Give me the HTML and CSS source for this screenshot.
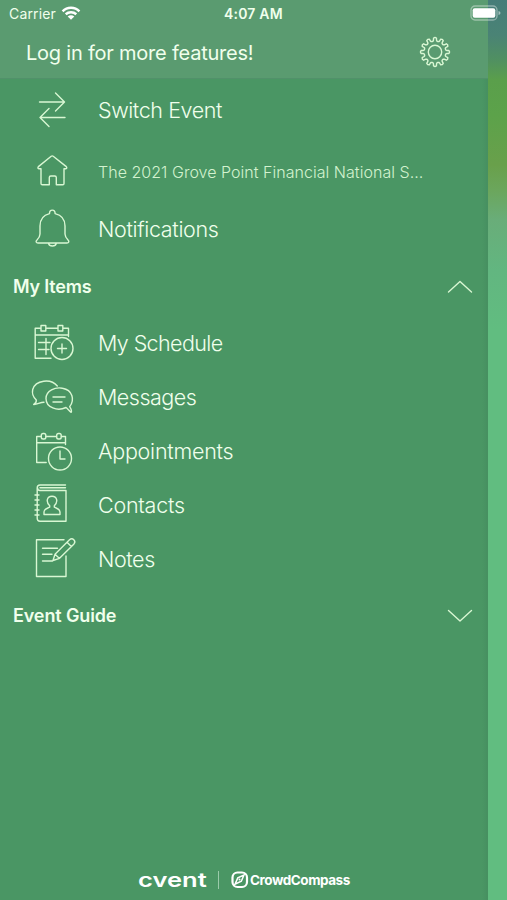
FILE: index.html
```html
<!DOCTYPE html>
<html lang="en">
<head>
<meta charset="utf-8">
<title>Event menu</title>
<link rel="stylesheet" href="styles.css">
</head>
<body>
<div class="screen">
  <nav class="drawer">
    <header class="top">
      <div class="status">
        <span class="carrier">Carrier</span>
        <svg class="wifi" viewBox="0 0 20 16"><path d="M1.600 6.300C6.200 1.700 13.800 1.700 18.400 6.300M4.700 9.300c3-2.700 7.600-2.700 10.600 0" fill="none" stroke="#fff" stroke-width="2.500"/><path d="M6.700 11.400c2-1.500 4.600-1.500 6.600 0L10 14.800z" fill="#fff"/></svg>
        <span class="time">4:07 AM</span>
      </div>
      <div class="login">
        <span class="login-text">Log in for more features!</span>
        <svg class="icon gear" viewBox="-16 -16 32 32"><circle r="6.700"/><path id="gear-path" d=""/></svg>
      </div>
    </header>
    <div class="item switch">
      <svg class="icon" viewBox="28 86 52 48"><path d="M39.500 102H64M55.500 93l9 9-9 9M65 117.500H40M49 108.500l-9 9 9 9"/></svg>
      <span class="label l-switch">Switch Event</span>
    </div>
    <div class="item home">
      <svg class="icon" viewBox="28 147 52 48"><path d="M51.200 156.300q1-.8 2 0L66.300 166.600q1.200 1.600-.6 2.200H64v14.700q0 1.300-1.200 1.300h-6.500v-7.300q0-1.500-1.500-1.500h-4q-1.500 0-1.500 1.500v7.300h-7q-1.300 0-1.300-1.300v-14.700h-2q-1.800-.6-.6-2.200z"/></svg>
      <span class="label small">The 2021 Grove Point Financial National S...</span>
    </div>
    <div class="item bell">
      <svg class="icon" viewBox="28 205 52 48"><path d="M49.500 213.600c0-4.600 5.600-4.600 5.600 0 6.500 1.500 9.900 6 9.900 12.400v8c0 3 1 4 3.200 6.200 1.200 1.200.6 2.800-1.200 2.800H38c-1.800 0-2.600-1.600-1.200-2.800 2.200-2 3.200-3.200 3.200-6.200v-8c0-6.400 3.200-10.900 9.500-12.400M48.500 243.300c.8 3.600 7 3.600 7.800 0"/></svg>
      <span class="label l-notif">Notifications</span>
    </div>
    <div class="section"><span class="s-items">My Items</span><svg class="icon chev" viewBox="0 0 26 14"><path d="M1.500 12L13 1.500l11.500 10.500"/></svg></div>
    <div class="item">
      <svg class="icon" viewBox="28 319 52 48"><path d="M41 328.200H35.200v30H51M46 328.200h12M63 328.200h5.500v8.300M35.200 335H68.500M41 325.500h4.800v5.500H41zM58 325.500h4.800v5.500H58zM38.500 342.500H50M38.500 349.500H49M46 338.500v16M62 344v9M57.500 348.500h9"/><circle cx="62" cy="348.500" r="11"/></svg>
      <span class="label l-sched">My Schedule</span>
    </div>
    <div class="item">
      <svg class="icon" viewBox="28 373 52 48"><path d="M57.300 386C51 378.300 35.500 379.800 32.700 389.500c-.9 4.300.6 7.800 3.600 10.500.1 2.200-1 3.900-2.600 4.500 3.600.2 6.200-2.300 10.300-2.300"/><path d="M69.700 406.700C75 399.500 72.500 390 62.500 388.200c-7.300-1.500-16.500 2.500-16.500 10.300 0 9.200 11.500 13 20 9 1.500 1 3.400 3.600 5.200 4.800 1-.9-.3-3.500-1.500-5.600zM53 397h12M53 402h9"/></svg>
      <span class="label l-mess">Messages</span>
    </div>
    <div class="item">
      <svg class="icon" viewBox="28 427 52 48"><path d="M41 436.500h-4.300V462.500h9.500M46 436.500h10.300M61.500 436.500h4v8M36.700 442.700h28.800M60 451v8h5"/><rect x="41.300" y="433.500" width="4.500" height="5.500" rx="1.800"/><rect x="56.700" y="433.500" width="4.500" height="5.500" rx="1.800"/><circle cx="60" cy="458.500" r="11.500"/></svg>
      <span class="label l-appt">Appointments</span>
    </div>
    <div class="item">
      <svg class="icon" viewBox="28 481 52 48"><path d="M65.500 485H40q-2.800 0-2.800 3v30.200q0 3 2.800 3h26V490.500H40q-2.500 0-2.500-2.700M40 487.800h25.500M35 495h4M35 500h4M35 505h4M35 510h4M35 515h4"/><path d="M49.700 505.700c-4-3.800-3-9.500 2.300-9.500s6.300 5.700 2.300 9.500v1.500c2.500 1.300 5.700 1.500 5.700 4.800v2.500H44V512c0-3.300 3.200-3.500 5.700-4.800z"/></svg>
      <span class="label l-cont">Contacts</span>
    </div>
    <div class="item">
      <svg class="icon" viewBox="28 535 52 48"><path d="M64 539.700H36.500v36.800H66V556M42.500 548.300h15M42.500 554.300h9.500M42.500 561h10M53 560.500l2-6.300 14.500-14.500q2.300-2 4.300 0t.2 4.200L59.500 558.300zM67 542.200l4.300 4.300M55 554.300l4.300 4"/></svg>
      <span class="label l-notes">Notes</span>
    </div>
    <div class="section"><span class="s-guide">Event Guide</span><svg class="icon chev" viewBox="0 0 26 14"><path d="M1.500 1.500L13 12l11.500-10.500"/></svg></div>
    <footer class="brands">
      <span class="cvent">cvent</span>
      <span class="bar"></span>
      <svg class="compass" viewBox="0 0 18 18"><rect x="1.500" y="1.500" width="14.500" height="14.500" rx="5" fill="none" stroke="#fff" stroke-width="2.200"/><path d="M13 4L10.300 10.200 4 13.200 6.800 6.900z" fill="none" stroke="#fff" stroke-width="1.500"/><circle cx="8.500" cy="8.600" r="1" fill="#fff"/></svg>
      <span class="crowd">CrowdCompass</span>
    </footer>
  </nav>
  <div class="behind"></div>
  <svg class="battery" viewBox="0 0 32 16"><rect x="1" y="1" width="26" height="14" rx="4" fill="none" stroke="#fff" stroke-opacity=".4" stroke-width="1.300"/><rect x="2.700" y="3.300" width="22.600" height="9.400" rx="2" fill="#fff"/><path d="M28.500 6v4q2-.7 2-2t-2-2" fill="#fff" fill-opacity=".5"/></svg>
</div>
<script src="gear.js"></script>
</body>
</html>
```
FILE: styles.css
```css
* { box-sizing: border-box; }
body { margin: 0; font-family: Inter, "Liberation Sans", sans-serif; color: #f0ffec; }
.screen { position: relative; display: flex; width: 507px; height: 900px; overflow: hidden; }
.drawer { display: flex; flex-direction: column; width: 488px; height: 900px; background: linear-gradient(90deg, #4a9664 482px, #479061 487px); }
.behind { flex: 1; background: linear-gradient(#467d79 0, #4a8375 35px, #509061 60px, #5a9f4b 80px, #5ca24a 115px, #69a04b 165px, #6ba65c 190px, #69ad79 220px, #62b680 270px, #61bd80 330px); }
.top { height: 79px; background: #5a9b70; border-bottom: 1px solid #51916a; }
.status { display: flex; align-items: center; height: 27px; padding-left: 9px; font-size: 14px; }
.carrier { width: 52px; white-space: nowrap; letter-spacing: .15px; }
.wifi { width: 20px; height: 16px; margin-bottom: 1px; }
.time { margin-left: 143px; font-weight: 600; white-space: nowrap; font-size: 14px; letter-spacing: .2px; }
.battery { position: absolute; left: 470px; top: 5px; width: 32px; height: 16px; }
.login { display: flex; align-items: center; justify-content: space-between; height: 51px; padding: 0 37px 0 26px; }
.login-text { font-size: 20px; letter-spacing: -.22px; white-space: nowrap; }
.icon { width: 52px; height: 48px; flex: none; fill: none; stroke: #d9f7d3; stroke-width: 1.4; stroke-linecap: round; stroke-linejoin: round; }
.gear { width: 32px; height: 32px; margin-bottom: 1px; }
.item { display: flex; align-items: center; height: 54px; padding-left: 28px; flex: none; }
.switch { height: 62px; }
.home { height: 60px; }
.bell { height: 56px; }
.label { margin-left: 18px; margin-bottom: 1px; font-size: 21.5px; font-weight: 300; white-space: nowrap; }
.l-switch { letter-spacing: -.42px; }
.l-notif { letter-spacing: -.33px; }
.l-sched { letter-spacing: -.6px; }
.l-mess { letter-spacing: -.5px; }
.l-appt { letter-spacing: -.25px; }
.l-cont { letter-spacing: -.25px; }
.l-notes { letter-spacing: -.4px; }
.small { font-size: 16px; letter-spacing: .03px; padding-top: 3px; color: #d3f2cf; }
.section { display: flex; align-items: center; justify-content: space-between; height: 59px; flex: none; padding: 0 15px 0 13px; font-size: 18px; font-weight: 600; }
.s-items { letter-spacing: -.2px; }
.s-guide { letter-spacing: -.13px; }
.chev { width: 26px; height: 14px; }
.brands { display: flex; align-items: center; height: 20px; margin-top: auto; margin-bottom: 10px; padding-left: 138px; color: #fff; }
.cvent { font-size: 19.5px; font-weight: 600; line-height: 20px; width: 80px; transform: scaleX(1.31); transform-origin: left; }
.bar { width: 1px; height: 18px; background: #9bcbaa; }
.compass { width: 18px; height: 18px; margin-left: 12px; }
.crowd { margin-left: 1px; font-size: 13.5px; font-weight: 700; letter-spacing: -.45px; }
```
FILE: gear.js
```js
const teeth = 12;
const profile = [[-0.5, 10.8], [-0.34, 11], [-0.25, 11.8], [-0.2, 14], [0, 14.6], [0.2, 14], [0.25, 11.8], [0.34, 11]];
const points = [];
for (let i = 0; i < teeth; i++) {
  for (const [offset, radius] of profile) {
    const a = ((i + offset) / teeth) * Math.PI * 2 - Math.PI / 2;
    points.push((radius * Math.cos(a)).toFixed(2) + " " + (radius * Math.sin(a)).toFixed(2));
  }
}
document.getElementById("gear-path").setAttribute("d", "M" + points.join("L") + "Z");
```
